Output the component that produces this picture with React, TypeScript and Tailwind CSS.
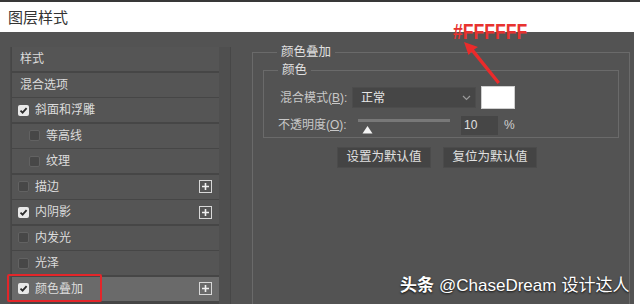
import React from "react";

type Row = {
  label: string;
  check?: "on" | "off";
  indent?: boolean;
  plus?: boolean;
  active?: boolean;
};

const rows: Row[] = [
  { label: "样式" },
  { label: "混合选项" },
  { label: "斜面和浮雕", check: "on" },
  { label: "等高线", check: "off", indent: true },
  { label: "纹理", check: "off", indent: true },
  { label: "描边", check: "off", plus: true },
  { label: "内阴影", check: "on", plus: true },
  { label: "内发光", check: "off" },
  { label: "光泽", check: "off" },
  { label: "颜色叠加", check: "on", plus: true, active: true },
];

function Checkbox({ on }: { on: boolean }) {
  if (!on) {
    return (
      <span className="w-[11px] h-[11px] rounded-[2px] bg-[#474747] border border-[#626262] shrink-0" />
    );
  }
  return (
    <span className="w-[11px] h-[11px] rounded-[2px] bg-[#e8e8e8] flex items-center justify-center shrink-0">
      <svg width="9" height="9" viewBox="0 0 9 9">
        <path d="M1.5 4.6 L3.6 6.6 L7.6 2.2" stroke="#2b2b2b" strokeWidth="1.8" fill="none" />
      </svg>
    </span>
  );
}

function PlusBox() {
  return (
    <span className="w-[13px] h-[13px] border border-[#d8d8d8] flex items-center justify-center shrink-0">
      <svg width="9" height="9" viewBox="0 0 9 9">
        <path d="M4.5 1 V8 M1 4.5 H8" stroke="#f0f0f0" strokeWidth="1.6" />
      </svg>
    </span>
  );
}

export default function App() {
  return (
    <div className="relative w-[640px] h-[304px] bg-white overflow-hidden font-['Liberation_Sans','Noto_Sans_CJK_SC',sans-serif]">
      <div className="h-[2px] bg-[#383838]" />
      <div className="h-[30px] flex items-center pl-2 pt-[2px] text-[15px] text-[#333]">图层样式</div>

      <div className="w-[634px] h-[272px] bg-[#535353] flex pt-[15px] pl-[10px] text-[12px] text-[#dcdcdc]">
        {/* style list */}
        <div className="w-[224px] flex border-l border-[#4a4a4a]">
          <div className="w-[208px] flex flex-col gap-[1.5px] bg-[#464646] pl-[1px]">
            {rows.map((r) => (
              <div
                key={r.label}
                className={
                  "h-[24px] flex items-center shrink-0 pr-[7px] " +
                  (r.active ? "bg-[#6a6a6a]" : "bg-[#555555]") +
                  (r.indent ? " pl-[17px]" : r.check ? " pl-[6px]" : " pl-[8px]")
                }
              >
                {r.check && <Checkbox on={r.check === "on"} />}
                <span className={r.check ? "ml-[6px]" : ""}>{r.label}</span>
                {r.plus && (
                  <span className="ml-auto">
                    <PlusBox />
                  </span>
                )}
              </div>
            ))}
          </div>
          <div className="w-[12px] bg-[#4f4f4f] border-r border-[#474747]" />
        </div>

        {/* settings */}
        <fieldset className="ml-[18px] w-[378px] h-[262px] border border-[#6a6a6a] px-[10px] -mt-[2px]">
          <legend className="ml-[14px] px-[4px] text-[12.5px] text-[#e0e0e0] leading-[14px]">颜色叠加</legend>
          <fieldset className="h-[75px] border border-[#6a6a6a] mt-[4px] pl-[16px]">
            <legend className="-ml-[2px] px-[4px] text-[12.5px] text-[#e0e0e0] leading-[14px]">颜色</legend>
            <div className="flex items-center mt-[9px] h-[23px]">
              <span className="w-[72px] text-[#c8c8c8]">混合模式(<u>B</u>):</span>
              <div className="w-[124px] h-[21px] bg-[#464646] border border-[#4c4c4c] flex items-center pl-[8px] pr-[4px] text-[#e6e6e6]">
                <span>正常</span>
                <svg className="ml-auto" width="9" height="6" viewBox="0 0 9 6">
                  <path d="M1 1 L4.5 4.5 L8 1" stroke="#9a9a9a" strokeWidth="1.2" fill="none" />
                </svg>
              </div>
              <div className="ml-[5px] w-[34px] h-[23px] bg-white border border-[#cfcfcf]" />
            </div>
            <div className="flex items-center h-[20px] mt-[6px] -ml-[2px]">
              <span className="w-[80px] text-[#c8c8c8]">不透明度(<u>O</u>):</span>
              <div className="w-[92px] relative h-[20px] flex flex-col">
                <div className="mt-[4px] h-[3px] bg-[#787878]" />
                <svg className="ml-[4px] mt-[4px]" width="11" height="8" viewBox="0 0 11 8">
                  <path d="M5.5 0 L10.5 7.5 L0.5 7.5 Z" fill="#f4f4f4" />
                </svg>
              </div>
              <div className="ml-[11px] w-[37px] h-[19px] bg-[#464646] flex items-center pl-[3px] text-[#e0e0e0]">10</div>
              <span className="ml-[6px] text-[#d0d0d0]">%</span>
            </div>
          </fieldset>
          <div className="flex gap-[12px] mt-[9px] ml-[74px]">
            <button className="w-[94px] h-[21px] bg-[#444444] border border-[#4b4b4b] text-[12.5px] text-[#e0e0e0]">设置为默认值</button>
            <button className="w-[94px] h-[21px] bg-[#444444] border border-[#4b4b4b] text-[12.5px] text-[#e0e0e0]">复位为默认值</button>
          </div>
        </fieldset>
      </div>

      {/* annotation: highlight box */}
      <div className="absolute left-[7px] top-[274px] w-[95px] h-[28px] border-2 border-[#e3262a] rounded-[2px]" />

      {/* annotation: colour label */}
      <div className="absolute left-[453px] top-[18px] text-[22px] font-bold text-[#e8322f] leading-[28px] scale-x-[0.8] origin-left font-['Liberation_Sans',sans-serif]">
        #FFFFFF
      </div>
      <svg className="absolute left-[460px] top-[38px]" width="44" height="48" viewBox="0 0 44 48">
        <path d="M4 4 L18 9 L14 11.5 L40 44 L37.5 46 L11.5 14 L8.5 17 Z" fill="#ea2b2b" />
      </svg>

      {/* watermark */}
      <div className="absolute left-[400px] top-[273px] flex items-center gap-[5px] text-[17px] text-white [text-shadow:0_1px_2px_rgba(0,0,0,0.85)] font-['Liberation_Sans','Noto_Sans_CJK_SC',sans-serif]">
        <span className="font-bold">头条</span>
        <span>@ChaseDream</span>
        <span>设计达人</span>
      </div>
    </div>
  );
}
